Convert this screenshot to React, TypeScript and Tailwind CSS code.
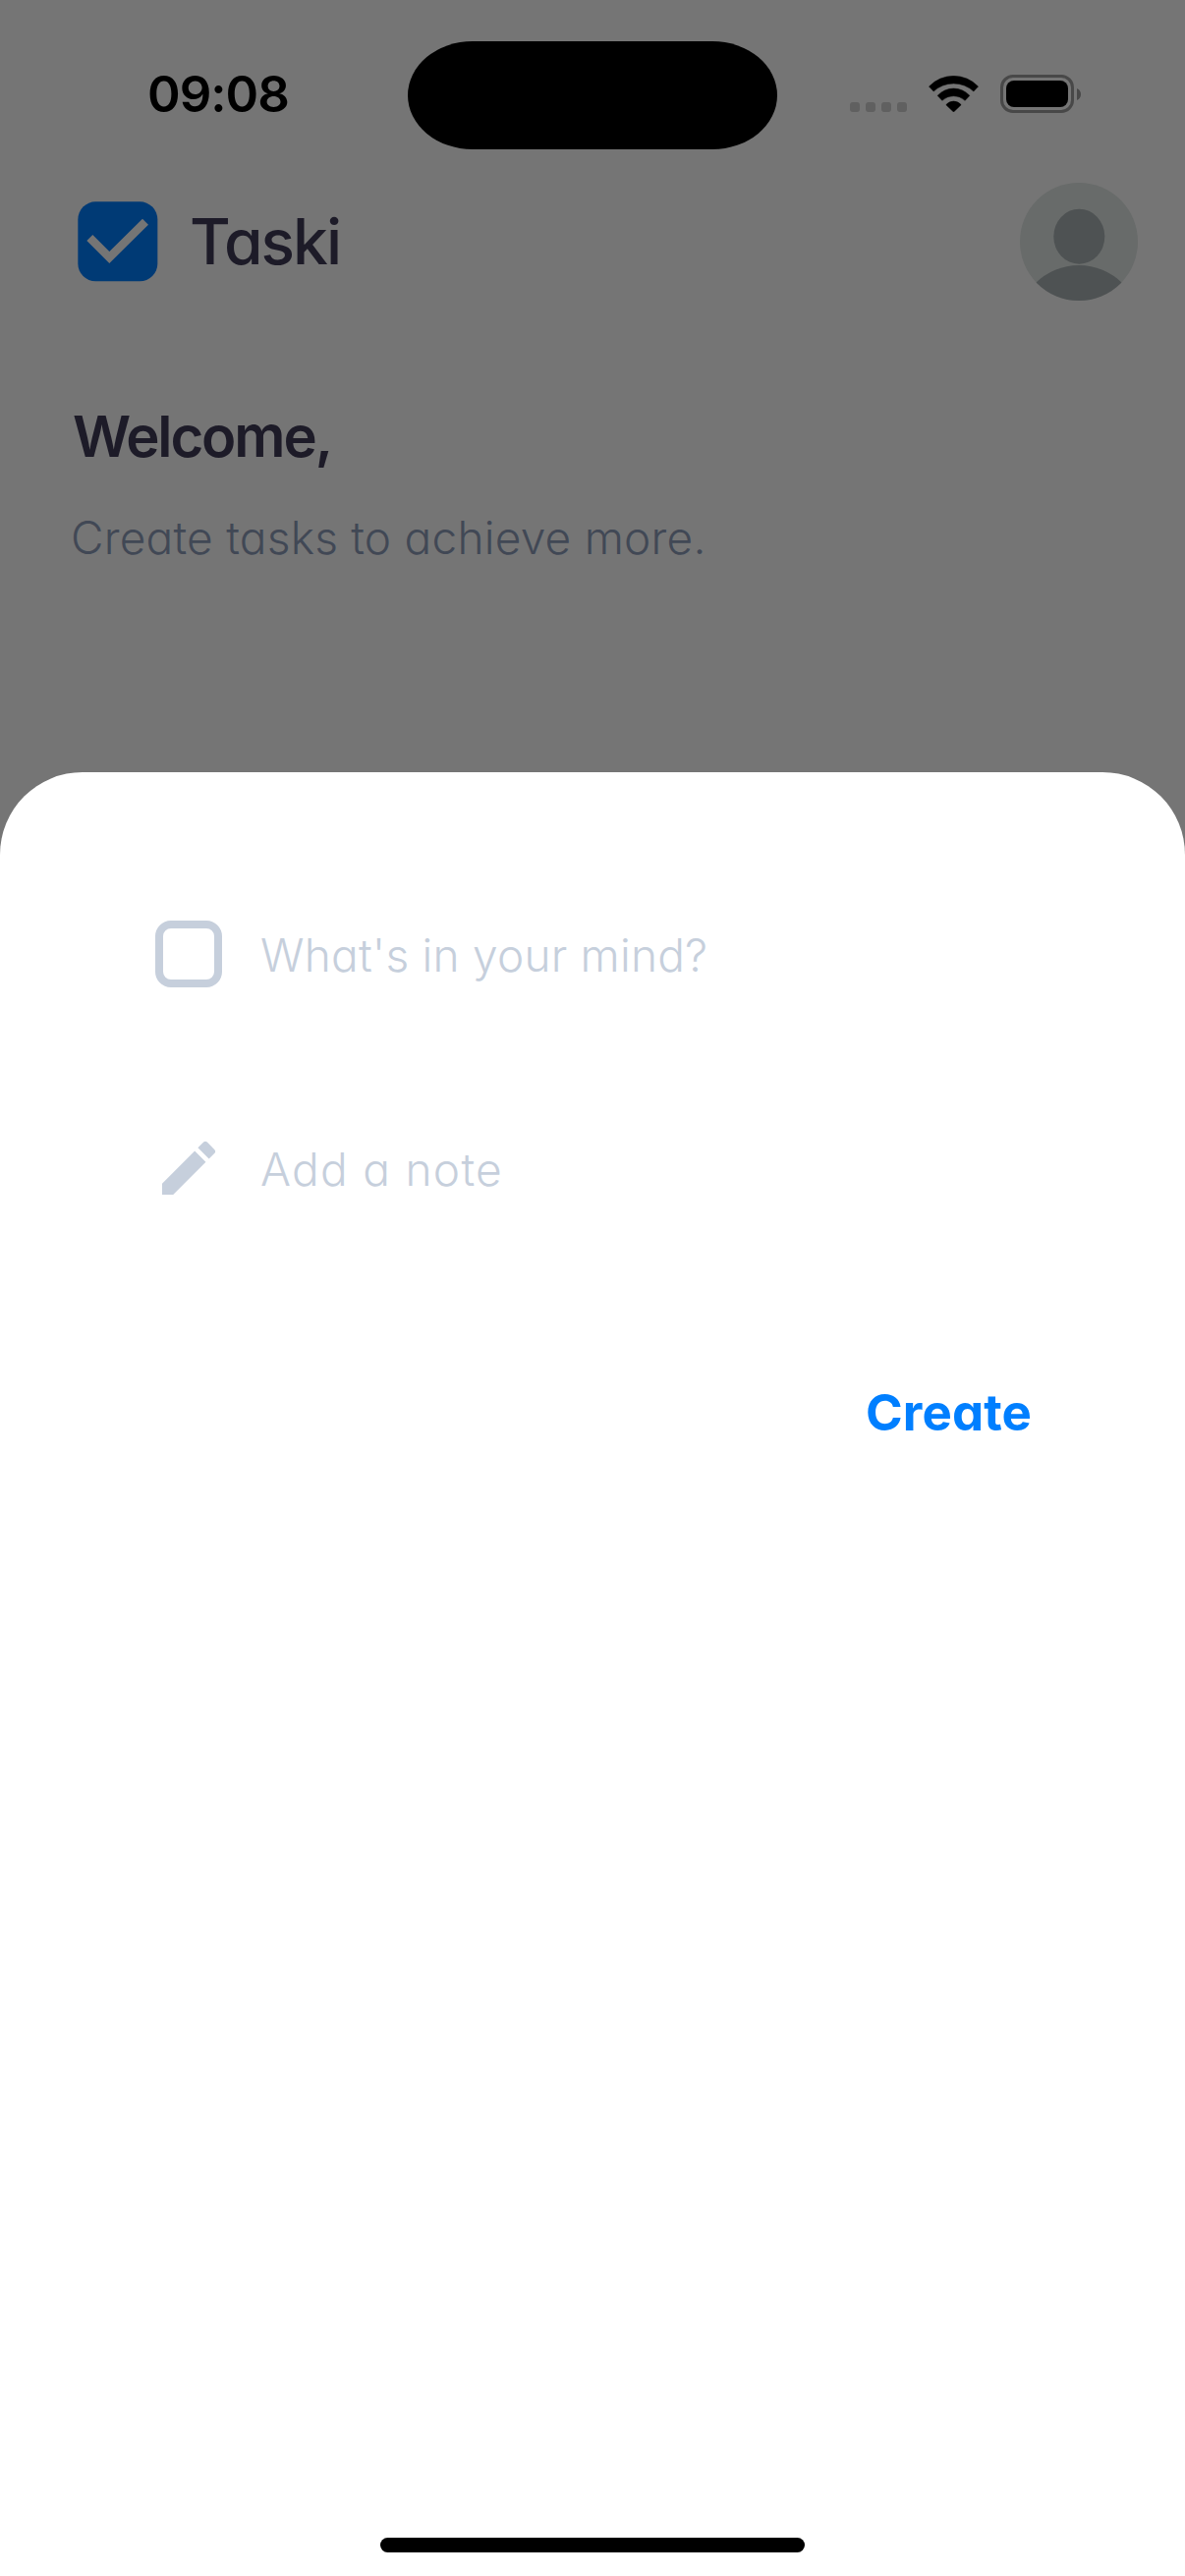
import type { ReactNode } from "react";

function WifiIcon() {
  return (
    <svg className="h-[37px] w-[51px]" viewBox="316 80 152 111" fill="#000">
      <path d="M317 113A104 104 0 0 1 467 113L453 128A89.5 89.5 0 0 0 331 128Z" stroke="#000" strokeWidth="1.5" strokeLinejoin="round" />
      <path d="M343 141A66 66 0 0 1 441 141L427 156A51 51 0 0 0 357 156Z" stroke="#000" strokeWidth="1.5" strokeLinejoin="round" />
      <path d="M369 169A30 30 0 0 1 415 169L392 191Z" stroke="#000" strokeWidth="1.5" strokeLinejoin="round" />
    </svg>
  );
}

function Battery() {
  return (
    <div className="flex items-center gap-[3px]">
      <div className="h-[39px] w-[75px] rounded-[13px] border-[3px] border-[#484848] p-[3px]">
        <div className="h-full w-full rounded-[8px] bg-black" />
      </div>
      <svg className="h-3 w-1" viewBox="0 0 4 12" fill="#484848">
        <path d="M0 0C2.500 1 4 3.300 4 6C4 8.700 2.500 11 0 12Z" />
      </svg>
    </div>
  );
}

function StatusBar() {
  return (
    <div className="grid h-[186px] grid-cols-[414px_378px_414px] items-center pt-[7px]">
      <span className="pb-[2px] pl-[150px] text-[51px] leading-none font-semibold tracking-[-1px] text-black">09:08</span>
      <div className="mx-auto mt-px h-[110px] w-[376px] rounded-[66px/55px] bg-black" />
      <div className="flex items-center pl-[73px]">
        <div className="mt-[24px] flex gap-[6px]">
          <i className="size-[10px] rounded-[3px] bg-[#606060]" />
          <i className="size-[10px] rounded-[3px] bg-[#606060]" />
          <i className="size-[10px] rounded-[3px] bg-[#606060]" />
          <i className="size-[10px] rounded-[3px] bg-[#606060]" />
        </div>
        <div className="ml-[22px] pb-[2px]">
          <WifiIcon />
        </div>
        <div className="ml-[22px] pb-[2px]">
          <Battery />
        </div>
      </div>
    </div>
  );
}

function Avatar() {
  return (
    <svg className="size-[120px]" viewBox="0 0 120 120">
      <defs>
        <clipPath id="avatar">
          <circle cx="60" cy="60" r="60" />
        </clipPath>
      </defs>
      <g clipPath="url(#avatar)">
        <rect width="120" height="120" fill="#686b6a" />
        <ellipse cx="60.300" cy="54.700" rx="26" ry="28" fill="#4e5253" />
        <circle cx="60" cy="146.700" r="62.700" fill="#4e5253" />
      </g>
    </svg>
  );
}

function Header() {
  return (
    <header className="flex h-[120px] items-center pr-[48px] pl-[79px]">
      <svg className="size-[82px]" viewBox="58 525 246 246">
        <rect x="59" y="526" width="243" height="243" rx="54" fill="#003a75" />
        <path d="M95 636L155 696L265 587" fill="none" stroke="#757575" strokeWidth="25.500" />
      </svg>
      <h1 className="ml-[32px] text-[64px] leading-[80px] font-medium tracking-[-1.9px] text-[#1d1b28]">Taski</h1>
      <div className="ml-auto">
        <Avatar />
      </div>
    </header>
  );
}

function Field({ icon, placeholder, spacing }: { icon: ReactNode; placeholder: string; spacing: string }) {
  return (
    <div className="flex h-[72px] items-center gap-[37px]">
      <div className="flex size-[72px] items-center justify-center">{icon}</div>
      <span className={`pt-px text-[46px] leading-[60px] font-light text-[#c6cfdc] ${spacing}`}>{placeholder}</span>
    </div>
  );
}

function Sheet() {
  return (
    <section className="flex flex-1 flex-col rounded-t-[84px] bg-white pt-[149px] pr-[156px] pl-[156px]">
      <Field
        icon={<div className="size-[68px] rounded-[16px] border-[8px] border-[#c6cfdc]" />}
        placeholder="What's in your mind?"
        spacing="tracking-[0.22px]"
      />
      <div className="mt-[146px]">
        <Field
          icon={
            <svg className="size-[72px]" viewBox="0 0 24 24" fill="#c6cfdc">
              <path d="M3 17.250V21h3.750L17.810 9.940l-3.750-3.750L3 17.250zM20.710 7.040a.996.996 0 0 0 0-1.410l-2.340-2.340a.996.996 0 0 0-1.410 0l-1.830 1.830 3.750 3.750 1.830-1.830z" />
            </svg>
          }
          placeholder="Add a note"
          spacing="tracking-[1.3px]"
        />
      </div>
      <button className="mt-[183px] self-end text-[51px] leading-[60px] font-bold tracking-[0.1px] text-[#007fff]">
        Create
      </button>
      <div className="mt-auto mb-[24px] h-[15px] w-[432px] self-center rounded-full bg-black" />
    </section>
  );
}

export default function App() {
  return (
    <main className="flex h-[2622px] w-[1206px] flex-col overflow-hidden bg-[#757575] font-['Inter',sans-serif] [font-feature-settings:'cv11']">
      <StatusBar />
      <Header />
      <div className="mt-[98px] pl-[74px]">
        <h2 className="text-[58px] leading-[80px] font-semibold tracking-[-2.1px] text-[#1d1b28]">Welcome,</h2>
        <p className="mt-[28px] -ml-[2px] text-[46px] leading-[70px] font-light tracking-[0.23px] text-[#414855]">
          Create tasks to achieve more.
        </p>
      </div>
      <div className="mt-[204px] flex flex-1">
        <Sheet />
      </div>
    </main>
  );
}
